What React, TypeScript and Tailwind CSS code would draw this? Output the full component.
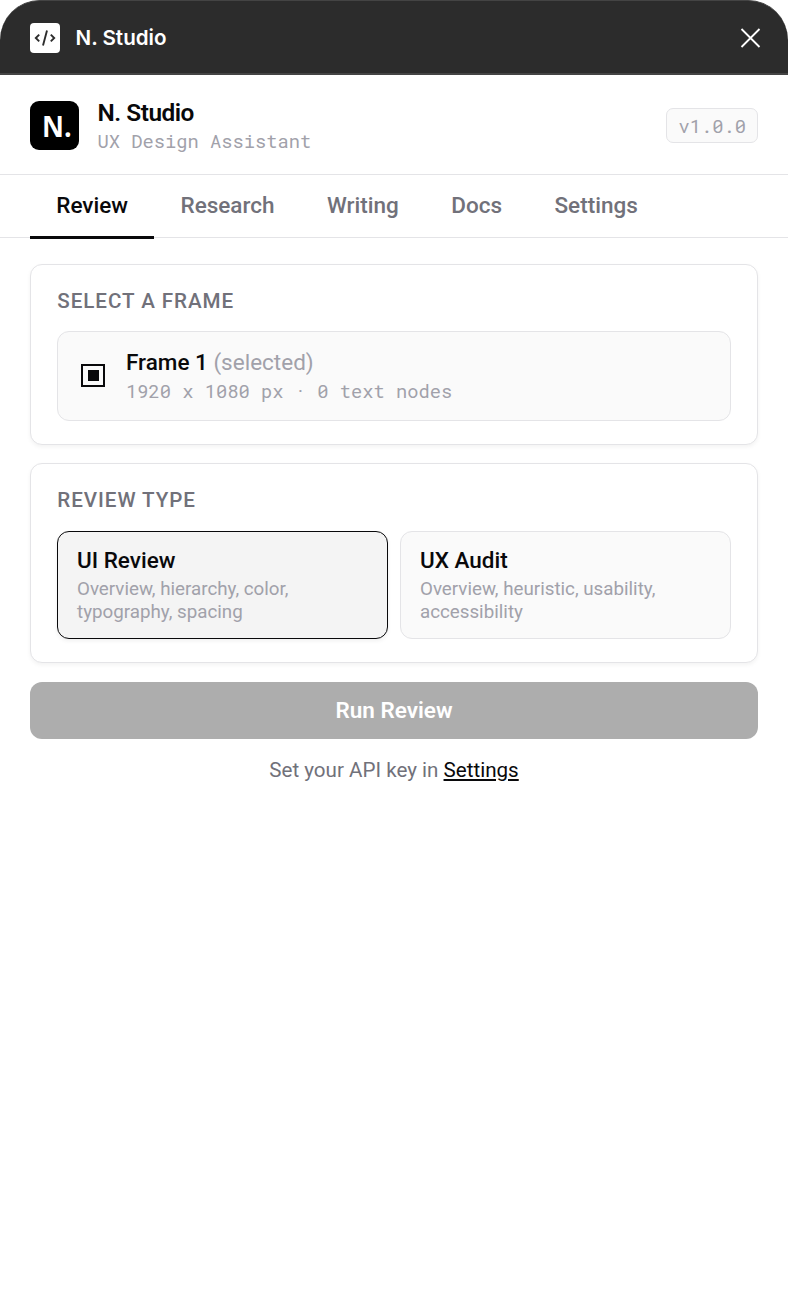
import { useState } from 'react'

const TABS = ['Review', 'Research', 'Writing', 'Docs', 'Settings']

const REVIEW_TYPES = [
  { id: 'ui', label: 'UI Review', desc: 'Overview, hierarchy, color, typography, spacing' },
  { id: 'ux', label: 'UX Audit', desc: 'Overview, heuristic, usability, accessibility' },
]

const MONO = "font-['Roboto_Mono','DejaVu_Sans_Mono',monospace]"

export default function App() {
  const [tab, setTab] = useState('Review')
  const [reviewType, setReviewType] = useState('ui')

  return (
    <div className="h-[1313px] w-[788px] bg-white font-['Roboto',sans-serif] text-[#09090b]">
      {/* Window bar */}
      <div className="flex h-[75px] items-center justify-between rounded-t-[40px] border-t border-b-2 border-t-[#444] border-b-[#444] bg-[#2c2c2c] pt-[2px] pr-[27px] pl-[30px]">
        <div className="flex items-center gap-[15.5px]">
          <div className="flex size-[30px] items-center justify-center rounded-[4px] bg-white">
            <svg width="22" height="18" viewBox="0 0 22 18" fill="none" stroke="#2c2c2c" strokeWidth="1.9">
              <path d="M5.2 5.6 1.8 9l3.4 3.4M16.8 5.6l3.4 3.4-3.4 3.4M13 1.6 9 16.4" />
            </svg>
          </div>
          <span className="font-['Inter',sans-serif] text-[20.6px] font-semibold text-white">N. Studio</span>
        </div>
        <button aria-label="Close">
          <svg width="21" height="21" viewBox="0 0 21 21" fill="none" stroke="#fff" strokeWidth="1.8">
            <path d="m1.5 1 18 18m0-18-18 18" />
          </svg>
        </button>
      </div>

      {/* Header */}
      <div className="flex h-[100px] items-center justify-between border-b border-[#e4e4e7] px-[30px] pt-[2px]">
        <div className="flex items-center gap-[18.5px]">
          <div className="flex size-[49px] items-center justify-center rounded-[9px] bg-black pl-1">
            <span className="scale-x-[0.93] font-['Open_Sans',sans-serif] text-[29px] leading-none font-bold text-white">N.</span>
          </div>
          <div>
            <div className="text-[24.4px] leading-[29px] font-semibold tracking-[-0.02em]">N. Studio</div>
            <div className={`${MONO} text-[18.75px] leading-[27px] text-[#a1a1aa]`}>UX Design Assistant</div>
          </div>
        </div>
        <span className={`${MONO} flex h-[35px] items-center rounded-[7px] border border-[#e4e4e7] bg-[#fafafa] px-[11px] pt-0.5 text-[18.75px] text-[#a1a1aa]`}>
          v1.0.0
        </span>
      </div>

      {/* Tabs */}
      <div className="flex h-[63px] border-b border-[#e4e4e7] px-[30px]">
        {TABS.map(t => (
          <button key={t} onClick={() => setTab(t)}
            className={`-mb-0.5 h-16 border-b-[3px] px-[26.25px] text-[22.5px] font-medium ${
              tab === t ? 'border-[#09090b] text-[#09090b]' : 'border-transparent text-[#71717a]'
            }`}>
            {t}
          </button>
        ))}
      </div>

      <div className="flex flex-col px-[30px] pt-[26px]">
        <section className="h-[181px] rounded-[12px] border border-[#e4e4e7] bg-white px-[26px] pt-[22px] shadow-[0_2px_4px_rgba(0,0,0,0.05)]">
          <h2 className="pl-[0.3px] text-[20.6px] leading-7 font-medium tracking-[0.046em] text-[#71717a]">SELECT A FRAME</h2>
          <div className="mt-4 flex h-[90px] items-center rounded-[12px] border border-[#e4e4e7] bg-[#fafafa] pl-[23px]">
            <svg width="24" height="24" viewBox="0 0 24 24" shapeRendering="crispEdges" fill="#09090b">
              <path d="M0 0h24v23H0zM2 2v19h20V2z" fillRule="evenodd" />
              <path d="M7 6h11v11H7z" />
            </svg>
            <div className="ml-[21px]">
              <div className="text-[22.5px] leading-[30px] font-medium">
                Frame 1 <span className="font-normal text-[#a1a1aa]">(selected)</span>
              </div>
              <div className={`${MONO} text-[18.75px] leading-[28px] text-[#a1a1aa]`}>1920 x 1080 px · 0 text nodes</div>
            </div>
          </div>
        </section>

        <section className="mt-[18px] h-[200px] rounded-[12px] border border-[#e4e4e7] bg-white px-[26px] pt-[22px] shadow-[0_2px_4px_rgba(0,0,0,0.05)]">
          <h2 className="pl-[0.3px] text-[20.6px] leading-7 font-medium tracking-[0.046em] text-[#71717a]">REVIEW TYPE</h2>
          <div className="mt-[17px] grid grid-cols-2 gap-3">
            {REVIEW_TYPES.map(r => (
              <button key={r.id} onClick={() => setReviewType(r.id)}
                className={`flex h-[108px] flex-col rounded-[12px] border px-[19px] pt-[13px] text-left ${
                  reviewType === r.id
                    ? 'border-[#09090b] bg-[#f4f4f4] shadow-[0_2px_4px_rgba(0,0,0,0.06)]'
                    : 'border-[#e4e4e7] bg-[#fafafa]'
                }`}>
                <div className="text-[22.5px] leading-[30px] font-medium">{r.label}</div>
                <div className="mt-[3px] w-[250px] text-[18.75px] leading-[23px] text-[#a1a1aa]">{r.desc}</div>
              </button>
            ))}
          </div>
        </section>

        <button disabled className="mt-[19px] h-[57px] rounded-[12px] bg-[#adadad] text-[22.5px] font-semibold text-white">
          Run Review
        </button>
        <p className="mt-[17px] text-center text-[20.6px] leading-7 text-[#71717a]">
          Set your API key in{' '}
          <a className="text-[#09090b] underline" onClick={() => setTab('Settings')}>Settings</a>
        </p>
      </div>
    </div>
  )
}
